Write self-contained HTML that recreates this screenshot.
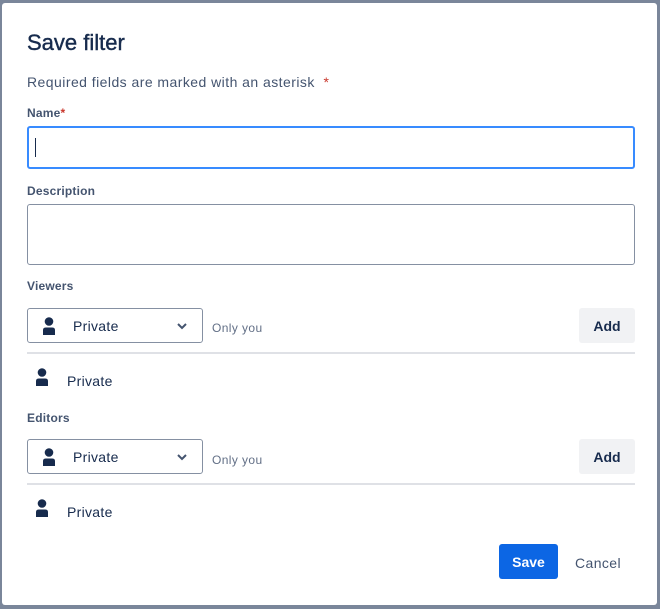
<!DOCTYPE html>
<html><head><style>
*{box-sizing:border-box;margin:0;padding:0}
body{width:660px;height:609px;background:#7a869a;font-family:"Liberation Sans",sans-serif;position:relative;overflow:hidden}
.dlg{position:absolute;left:2px;top:3px;width:655px;height:602px;background:#fff;border-radius:3px}
.a{position:absolute}
.lbl{font-size:12px;font-weight:bold;color:#44546f;letter-spacing:0.2px}
.inp{border:1px solid #8590a2;border-radius:3px;background:#fff}
.sel{border:1px solid #8590a2;border-radius:3px;width:176px;height:35px}
.sel span{position:absolute;left:45px;top:9px;font-size:14px;color:#172b4d;letter-spacing:0.3px}
.hint{font-size:12px;color:#626f86;letter-spacing:0.4px}
.add{background:#f1f2f4;border-radius:3px;width:56px;height:35px;font-size:14px;font-weight:bold;color:#172b4d;text-align:center;line-height:36px}
.hr{height:2px;background:#dfe1e6;width:608px;left:27px}
.pt{font-size:14px;color:#172b4d;letter-spacing:0.3px}
</style></head><body>
<div class="dlg"></div>
<svg width="0" height="0" style="position:absolute"><defs><g id="u"><circle cx="7" cy="4.5" r="4.3" fill="#172b4d"/><path d="M1 18 V13 Q1 10.5 4 10.5 H10 Q13 10.5 13 13 V18 Z" fill="#172b4d"/></g></defs></svg>
<div class="a" style="left:27px;top:30px;font-size:22px;color:#172b4d;-webkit-text-stroke:0.4px #172b4d">Save filter</div>
<div class="a" style="left:27px;top:74px;font-size:14px;color:#44546f;letter-spacing:0.45px">Required fields are marked with an asterisk <span style="color:#c9372c">&nbsp;*</span></div>
<div class="a lbl" style="left:27px;top:106px">Name<span style="color:#c9372c">*</span></div>
<div class="a" style="left:27px;top:126px;width:608px;height:43px;border:2px solid #388bff;border-radius:3px"></div>
<div class="a" style="left:35px;top:138px;width:1px;height:19px;background:#172b4d"></div>
<div class="a lbl" style="left:27px;top:184px">Description</div>
<div class="a inp" style="left:27px;top:204px;width:608px;height:61px"></div>
<div class="a lbl" style="left:27px;top:279px">Viewers</div>
<div class="a sel" style="left:27px;top:308px"><svg class="a" style="left:14px;top:8px" width="14" height="18"><use href="#u"/></svg><span>Private</span><svg class="a" style="left:148px;top:13px" width="12" height="8"><path d="M2 2 L6 6 L10 2" stroke="#44546f" stroke-width="2" fill="none"/></svg></div>
<div class="a hint" style="left:212px;top:321px">Only you</div>
<div class="a add" style="left:579px;top:308px">Add</div>
<div class="a hr" style="top:352px"></div>
<svg class="a" style="left:35px;top:368px" width="14" height="18"><use href="#u"/></svg>
<div class="a pt" style="left:67px;top:373px">Private</div>
<div class="a lbl" style="left:27px;top:411px">Editors</div>
<div class="a sel" style="left:27px;top:439px"><svg class="a" style="left:14px;top:8px" width="14" height="18"><use href="#u"/></svg><span>Private</span><svg class="a" style="left:148px;top:13px" width="12" height="8"><path d="M2 2 L6 6 L10 2" stroke="#44546f" stroke-width="2" fill="none"/></svg></div>
<div class="a hint" style="left:212px;top:453px">Only you</div>
<div class="a add" style="left:579px;top:439px">Add</div>
<div class="a hr" style="top:483px"></div>
<svg class="a" style="left:35px;top:499px" width="14" height="18"><use href="#u"/></svg>
<div class="a pt" style="left:67px;top:504px">Private</div>
<div class="a" style="left:499px;top:544px;width:59px;height:35px;background:#0c66e4;border-radius:3px;color:#fff;font-size:14px;font-weight:bold;text-align:center;line-height:36px">Save</div>
<div class="a" style="left:575px;top:555px;font-size:14px;color:#44546f;letter-spacing:0.4px">Cancel</div>
</body></html>
